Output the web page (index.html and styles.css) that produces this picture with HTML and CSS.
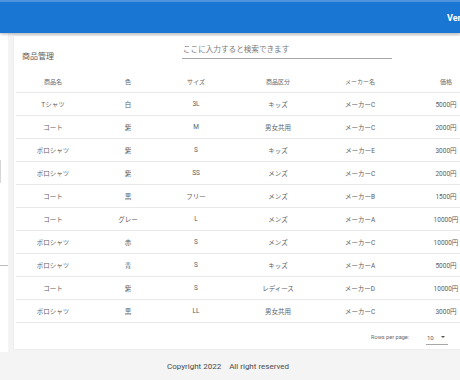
FILE: index.html
```html
<!DOCTYPE html>
<html lang="ja">
<head>
<meta charset="utf-8">
<link rel="stylesheet" href="styles.css">
</head>
<body>
<header class="appbar">
  <div class="appbar-title">Ver.1.0</div>
</header>
<div class="main">
  <aside class="side">
    <div class="side-box"></div>
    <div class="side-rule"></div>
  </aside>
  <section class="card">
    <div class="toolbar">
      <div class="title">商品管理</div>
      <div class="search">ここに入力すると検索できます</div>
    </div>
    <table class="tbl">
      <colgroup>
        <col class="c1"><col class="c2"><col class="c3"><col class="c4"><col class="c5"><col class="c6">
      </colgroup>
      <thead>
        <tr><th>商品名</th><th>色</th><th>サイズ</th><th>商品区分</th><th>メーカー名</th><th>価格</th></tr>
      </thead>
      <tbody>
        <tr><td>Tシャツ</td><td>白</td><td>3L</td><td>キッズ</td><td>メーカーC</td><td>5000円</td></tr>
        <tr><td>コート</td><td>紫</td><td>M</td><td>男女共用</td><td>メーカーC</td><td>2000円</td></tr>
        <tr><td>ポロシャツ</td><td>紫</td><td>S</td><td>キッズ</td><td>メーカーE</td><td>3000円</td></tr>
        <tr><td>ポロシャツ</td><td>紫</td><td>SS</td><td>メンズ</td><td>メーカーC</td><td>2000円</td></tr>
        <tr><td>コート</td><td>黒</td><td>フリー</td><td>メンズ</td><td>メーカーB</td><td>1500円</td></tr>
        <tr><td>コート</td><td>グレー</td><td>L</td><td>メンズ</td><td>メーカーA</td><td>10000円</td></tr>
        <tr><td>ポロシャツ</td><td>赤</td><td>S</td><td>メンズ</td><td>メーカーC</td><td>10000円</td></tr>
        <tr><td>ポロシャツ</td><td>青</td><td>S</td><td>キッズ</td><td>メーカーA</td><td>5000円</td></tr>
        <tr><td>コート</td><td>紫</td><td>S</td><td>レディース</td><td>メーカーD</td><td>10000円</td></tr>
        <tr><td>ポロシャツ</td><td>黒</td><td>LL</td><td>男女共用</td><td>メーカーC</td><td>3000円</td></tr>
      </tbody>
    </table>
    <div class="pager">
      <span class="pager-label">Rows per page:</span>
      <span class="pager-select"><span>10</span><span class="caret"></span></span>
    </div>
  </section>
</div>
<footer class="footer">Copyright 2022　All right reserved</footer>
</body>
</html>
```
FILE: styles.css
```css
html, body {
  margin: 0;
  padding: 0;
  width: 460px;
  height: 380px;
  overflow: hidden;
  background: #f4f4f4;
  font-family: Roboto, "Noto Sans CJK JP", sans-serif;
}
.appbar {
  height: 33px;
  box-sizing: border-box;
  background: #1976d2;
  border-top: 2px solid #4f93dc;
  box-shadow: 0 1px 3px rgba(0,0,0,0.3);
  display: flex;
  align-items: center;
  padding-left: 447px;
  overflow: hidden;
  white-space: nowrap;
  position: relative;
  z-index: 2;
}
.appbar-title {
  color: #fff;
  font-weight: bold;
  font-size: 9px;
}
.main {
  display: flex;
  height: 319px;
  overflow: hidden;
  background: #f4f4f4;
}
.side {
  flex: 0 0 8px;
  background: #fff;
  display: flex;
  flex-direction: column;
}
.side-box {
  margin-top: 127px;
  height: 23px;
  border-left: 1px solid #d6d6d6;
}
.side-rule {
  margin-top: 82px;
  border-top: 1px solid #bdbdbd;
}
.card {
  flex: 0 0 500px;
  margin: 3px 0 3px 6px;
  background: #fff;
  box-shadow: 0 0 2px rgba(0,0,0,0.08);
  padding-left: 2px;
  box-sizing: border-box;
}
.toolbar {
  height: 34px;
  display: flex;
  align-items: flex-start;
  padding-left: 6px;
}
.title {
  width: 160px;
  margin-top: 16px;
  font-size: 8px;
  line-height: 10px;
  color: #5c5c5c;
}
.search {
  width: 210px;
  margin-top: 7px;
  font-size: 7.6px;
  line-height: 13px;
  padding-bottom: 2px;
  padding-left: 1px;
  color: #7a7a7a;
  border-bottom: 1px solid #a8a8a8;
  box-sizing: border-box;
}
.tbl {
  border-collapse: collapse;
  table-layout: fixed;
  width: 486px;
}
.c1 { width: 74px; }
.c2 { width: 76px; }
.c3 { width: 60px; }
.c4 { width: 104px; }
.c5 { width: 60px; }
.c6 { width: 112px; }
.tbl th, .tbl td {
  height: 22px;
  padding: 0;
  text-align: center;
  border-bottom: 1px solid #e8e8e8;
  white-space: nowrap;
}
.tbl th {
  font-weight: normal;
  font-size: 6px;
  color: #666;
}
.tbl td {
  font-size: 6.5px;
  color: #5e5e5e;
}
.pager {
  height: 27px;
  display: flex;
  align-items: center;
  padding-left: 355px;
}
.pager-label {
  font-size: 5.6px;
  color: #6a6a6a;
  width: 55px;
}
.pager-select {
  display: flex;
  align-items: center;
  width: 22px;
  height: 12px;
  border-bottom: 1px solid #a8a8a8;
  margin-top: 4px;
  font-size: 6px;
  color: #5e5e5e;
  box-sizing: border-box;
  padding-bottom: 2px;
}
.pager-select span:first-child {
  flex: 1;
  padding-left: 1px;
}
.caret {
  width: 0;
  height: 0;
  border-left: 2px solid transparent;
  border-right: 2px solid transparent;
  border-top: 2px solid #555;
  margin-right: 3px;
}
.footer {
  height: 28px;
  display: flex;
  align-items: center;
  justify-content: center;
  font-size: 8px;
  color: #4a4a4a;
  background: #f4f4f4;
  padding-right: 4px;
  padding-bottom: 2px;
  box-sizing: border-box;
}
```
